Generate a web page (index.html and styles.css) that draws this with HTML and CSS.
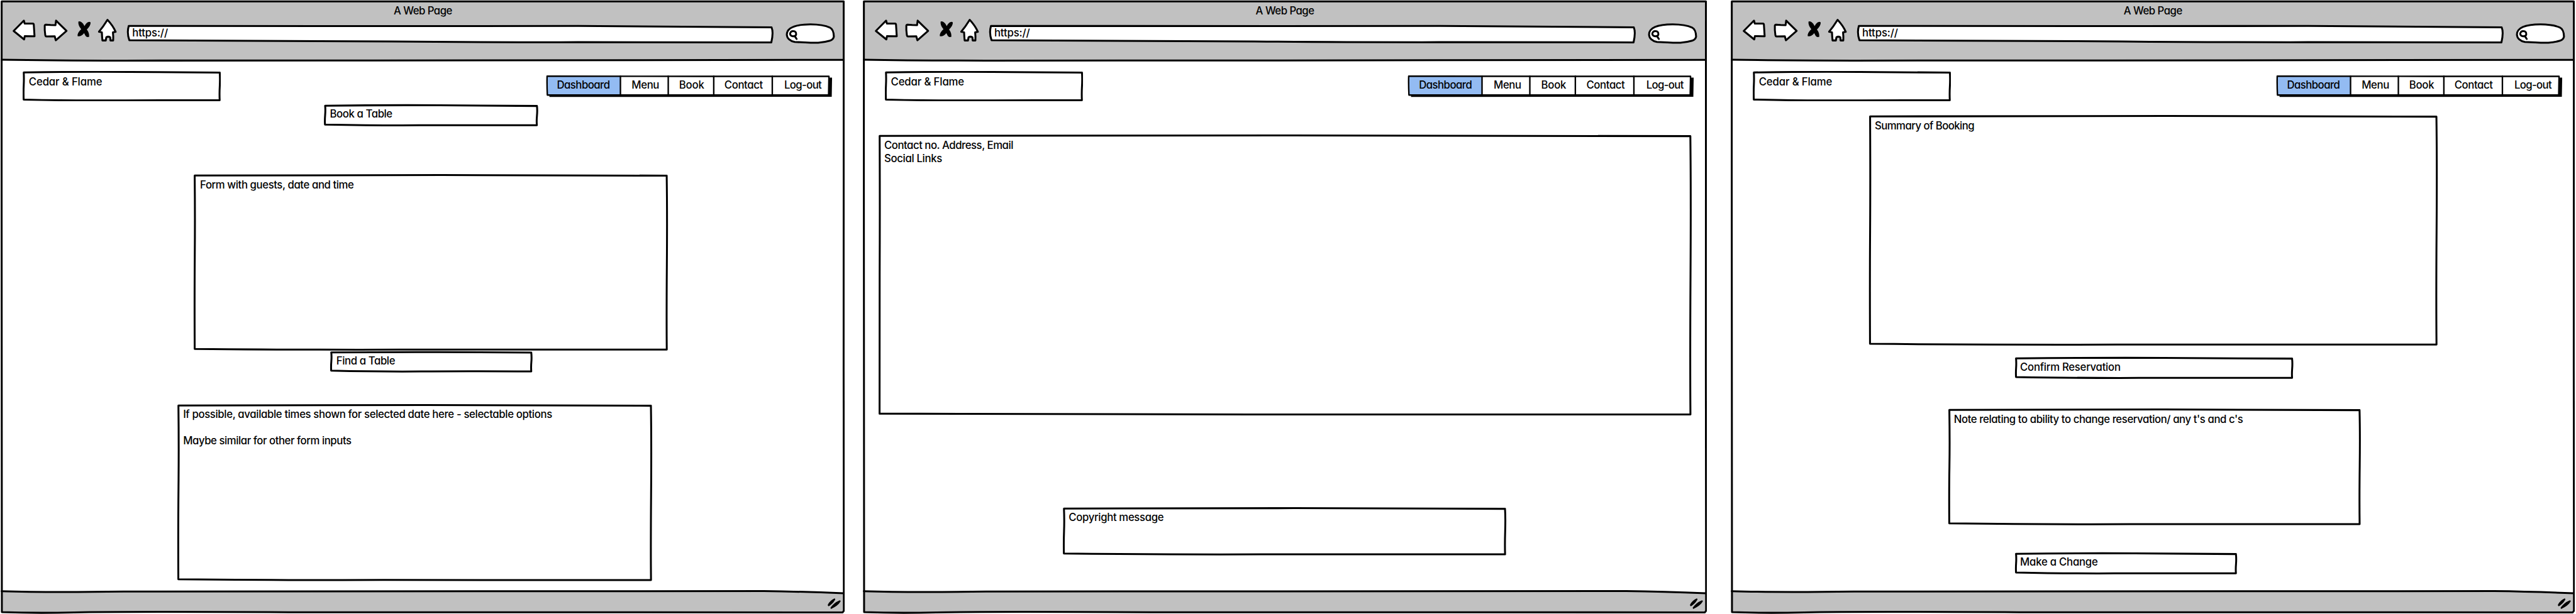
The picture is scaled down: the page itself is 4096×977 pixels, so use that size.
FILE: index.html
```html
<!DOCTYPE html>
<html lang="en">
<head>
<meta charset="utf-8">
<title>Cedar &amp; Flame wireframes</title>
<link rel="stylesheet" href="styles.css">
</head>
<body>
<svg class="defs" aria-hidden="true">
  <symbol id="frame" viewBox="2 0 2044 1488" preserveAspectRatio="none">
    <path fill="#c1c1c1" d="M4.5 3.5H2043.5V145L1500 145.6 900 146.6 150 146.6 4.5 145Z"/>
    <path fill="#c1c1c1" d="M4.5 1432.6Q110 1436 300 1433.5 1000 1430.8 1850 1432.4 1940 1433.5 2043.5 1437.6V1484H4.5Z"/>
    <g class="ink">
      <path d="M4.5 3.5H2043.6Q2044.6 500 2043.4 900L2044 1480 2041 1484Q1200 1485.4 700 1483.6 300 1481.6 180 1484 90 1486.4 5 1483.4 3.4 1100 4.4 400Z"/>
      <path d="M4.5 144.6Q120 146.6 300 146.8L900 146.6Q1500 145 2043 145"/>
      <path d="M4.5 1432.6Q110 1436 300 1433.5 1000 1430.8 1850 1432.4 1940 1433.5 2043.5 1437.6"/>
    </g>
    <path d="M2021 1450.4Q2024 1450.6 2022.8 1453.4 2017 1464 2007 1469.2 2004.6 1468.6 2005.2 1465 2011 1455 2021 1450.4Z"/>
    <path d="M2033 1455Q2036.6 1454.6 2036 1457.6 2029 1469 2013 1475.6 2011 1475 2012 1472 2020 1460.4 2033 1455Z"/>
  </symbol>
  <symbol id="back" viewBox="28 43 64 66">
    <path class="ink" fill="#fff" d="M33.6 75.4 58.4 50.2 60.4 57.6 80 57.4Q82.2 57.6 82.4 60L84.2 88.2 60.6 87.8 59 96Z"/>
  </symbol>
  <symbol id="forward" viewBox="100 43 72 66">
    <path class="ink" fill="#fff" d="M107.8 62.6Q108 60.2 110.8 60L122 60.8 133.8 61.2 135.2 50.4 160.6 75.2 134.6 98 132 88.4 112 88.6Q109.6 88.4 109.2 86 107.2 74 107.8 62.6Z"/>
  </symbol>
  <symbol id="stop" viewBox="180 43 48 66">
    <path d="M190.2 52.4Q196 50.6 201.6 58L205 63.4Q209 55.4 214.6 53.6 218.6 52.8 219.6 54.8 220.4 62 210.6 72 216.8 80 216.2 89.6 211.6 91.6 207.6 87.4L204 80.6Q197 89.4 188.2 88 187 79.6 197 71 188.6 61.6 190.2 52.4Z"/>
  </symbol>
  <symbol id="home" viewBox="236 43 56 66">
    <path class="ink" fill="#fff" d="M260.2 48.4Q273 62 280 77.4L273.4 78.8Q274.6 89 274 98.4H267.4L266.8 90.6Q262 88 257.4 90.6L256 98.4H248Q247 89 246.6 78.6L239.6 77.4Q250 65 260.2 48.4Z"/>
  </symbol>
  <symbol id="address" viewBox="300 43 1584 66">
    <path class="ink" fill="#fff" d="M311.6 63.2 1000 63.6 1400 63.2Q1700 65.4 1868.6 66.6 1873.6 79 1868 103L1400 102.6Q1150 102.8 950 100.8 700 98.6 313 97.8 306.6 80 311.6 63.2Z"/>
  </symbol>
  <symbol id="search" viewBox="1892 43 136 66">
    <path class="ink" fill="#fff" d="M1905.8 84C1906 66 1930 59.6 1963 59.4 1985 59.6 2000 62.4 2010 67 2017.6 71 2019.6 80 2019.8 89 2018.6 96 2015 97.6 2010 99 1990 105 1975 104.6 1950 103.2L1925 102C1914 100 1906 93 1905.8 84Z"/>
    <path class="ink" fill="none" d="M1921 75.6C1927 75.6 1929 80 1928.4 84 1927.6 88 1924.6 88.2 1920.6 88.2 1915 88 1913.6 84 1913.8 81.6 1914.6 78 1917 75.6 1921 75.6ZM1925.4 88.4 1929.6 94.8"/>
  </symbol>
  <symbol id="tabs" viewBox="1320 180 698 58">
    <path d="M1330 229H2006V188.3H2014.6L2013.8 234.8 1330 235.4Z"/>
    <path fill="#fff" d="M1324 185H2007V230H1324Z"/>
    <path fill="#93bbf2" d="M1324.6 185H1502V230H1324.6Z"/>
    <g class="ink thin">
      <path d="M1324.4 184.8 1700 185.3 2007 185.4 2006.2 230.4 1325 230.6Q1323.8 206 1324.4 184.8Z"/>
      <path d="M1502 185V230M1617.8 185V230M1728 185V230M1869.8 185V230"/>
    </g>
  </symbol>
  <symbol id="brand-box" viewBox="0 0 480 73">
    <path class="ink" fill="none" d="M2.6 3.4Q130 1.4 260 2.3T477.4 3.8Q478.4 20 477.4 37T477.2 70.8Q300 70.4 210 71.2T2.4 69.2Q1.8 50 2.6 34T2.6 3.4Z"/>
  </symbol>
</svg>

<main class="board">

  <section class="window window-book">
    <svg class="frame"><use href="#frame"/></svg>
    <div class="page">
      <header class="chrome">
        <h1 class="title">A Web Page</h1>
        <div class="toolbar">
          <svg class="back"><use href="#back"/></svg>
          <svg class="forward"><use href="#forward"/></svg>
          <svg class="stop"><use href="#stop"/></svg>
          <svg class="home"><use href="#home"/></svg>
          <div class="address"><svg><use href="#address"/></svg><span>https://</span></div>
          <svg class="search"><use href="#search"/></svg>
        </div>
      </header>
      <div class="topbar">
        <div class="brand"><svg viewBox="0 0 480 73"><use href="#brand-box"/></svg><p>Cedar &amp; Flame</p></div>
        <nav class="tabs">
          <svg><use href="#tabs"/></svg>
          <div class="tab-row">
            <a class="tab-dashboard">Dashboard</a><a class="tab-menu">Menu</a><a class="tab-book">Book</a><a class="tab-contact">Contact</a><a class="tab-logout">Log-out</a>
          </div>
        </nav>
      </div>
      <div class="box small book-table">
        <svg viewBox="0 0 519 53"><path class="ink" fill="none" d="M3 3.4Q140 1.6 280 2.3T516 4Q517.2 15 516 28T515.8 50.6Q330 50.2 230 50.8T2.6 49Q2 38 3 26T3 3.4Z"/></svg>
        <p>Book a Table</p>
      </div>
      <div class="box form">
        <svg viewBox="0 0 1148 428"><path class="ink" fill="none" d="M2.4 3.4Q300 1.8 600 2.4T1145.4 3.8Q1146.8 90 1145.8 220T1145.6 425.4Q700 424.6 500 425.4T2.4 423.6Q1.8 300 2.6 200T2.4 3.4Z"/></svg>
        <p>Form with guests, date and time</p>
      </div>
      <div class="box tiny find-table">
        <svg viewBox="0 0 490 51"><path class="ink" fill="none" d="M2.6 2.8Q130 1.6 260 1.9T487 3Q488.2 15 487.2 26T487 48.8Q320 48 220 48.8T2.4 46.8Q1.8 36 2.8 24T2.6 2.8Z"/></svg>
        <p>Find a Table</p>
      </div>
      <div class="box times">
        <svg viewBox="0 0 1150 429"><path class="ink" fill="none" d="M2.6 3.4Q300 1.8 600 2.4T1146.8 4Q1148.2 90 1147.2 220T1147 426.4Q700 425.4 500 426.2T2.4 424.4Q1.8 300 2.8 200T2.6 3.4Z"/></svg>
        <div class="lines"><p class="line-times">If possible, available times shown for selected date here - selectable options</p><p class="line-maybe">Maybe similar for other form inputs</p></div>
      </div>
    </div>
  </section>

  <section class="window window-contact">
    <svg class="frame"><use href="#frame"/></svg>
    <div class="page">
      <header class="chrome">
        <h1 class="title">A Web Page</h1>
        <div class="toolbar">
          <svg class="back"><use href="#back"/></svg>
          <svg class="forward"><use href="#forward"/></svg>
          <svg class="stop"><use href="#stop"/></svg>
          <svg class="home"><use href="#home"/></svg>
          <div class="address"><svg><use href="#address"/></svg><span>https://</span></div>
          <svg class="search"><use href="#search"/></svg>
        </div>
      </header>
      <div class="topbar">
        <div class="brand"><svg viewBox="0 0 480 73"><use href="#brand-box"/></svg><p>Cedar &amp; Flame</p></div>
        <nav class="tabs">
          <svg><use href="#tabs"/></svg>
          <div class="tab-row">
            <a class="tab-dashboard">Dashboard</a><a class="tab-menu">Menu</a><a class="tab-book">Book</a><a class="tab-contact">Contact</a><a class="tab-logout">Log-out</a>
          </div>
        </nav>
      </div>
      <div class="box contact">
        <svg viewBox="0 0 1969 681"><path class="ink" fill="none" d="M2.6 3.4Q500 1.8 1000 2.4T1965.8 4Q1967.4 140 1966.2 340T1966 678.4Q1200 677.6 900 678.4T2.4 676.4Q1.8 500 2.6 340T2.6 3.4Z"/></svg>
        <div class="lines"><p class="line-contact">Contact no. Address, Email</p><p class="line-social">Social Links</p></div>
      </div>
      <div class="box copyright">
        <svg viewBox="0 0 1074 117"><path class="ink" fill="none" d="M2.6 3.4Q300 1.8 560 2.4T1070.8 4Q1072.2 25 1071.2 58T1071 114.4Q700 113.6 480 114.4T2.4 112.4Q1.8 85 2.8 58T2.6 3.4Z"/></svg>
        <p>Copyright message</p>
      </div>
    </div>
  </section>

  <section class="window window-summary">
    <svg class="frame"><use href="#frame"/></svg>
    <div class="page">
      <header class="chrome">
        <h1 class="title">A Web Page</h1>
        <div class="toolbar">
          <svg class="back"><use href="#back"/></svg>
          <svg class="forward"><use href="#forward"/></svg>
          <svg class="stop"><use href="#stop"/></svg>
          <svg class="home"><use href="#home"/></svg>
          <div class="address"><svg><use href="#address"/></svg><span>https://</span></div>
          <svg class="search"><use href="#search"/></svg>
        </div>
      </header>
      <div class="topbar">
        <div class="brand"><svg viewBox="0 0 480 73"><use href="#brand-box"/></svg><p>Cedar &amp; Flame</p></div>
        <nav class="tabs">
          <svg><use href="#tabs"/></svg>
          <div class="tab-row">
            <a class="tab-dashboard">Dashboard</a><a class="tab-menu">Menu</a><a class="tab-book">Book</a><a class="tab-contact">Contact</a><a class="tab-logout">Log-out</a>
          </div>
        </nav>
      </div>
      <div class="box summary">
        <svg viewBox="0 0 1377 559"><path class="ink" fill="none" d="M2.4 3.4Q400 1.8 720 2.4T1373.8 4Q1375.4 120 1374.2 280T1374 556.4Q900 555.6 600 556.4T2.2 554.4Q1.6 400 2.4 280T2.4 3.4Z"/></svg>
        <p>Summary of Booking</p>
      </div>
      <div class="box small confirm">
        <svg viewBox="0 0 674 53"><path class="ink" fill="none" d="M2.4 3.4Q200 1.6 360 2.3T671 4Q672.2 15 671.2 28T671 50.6Q430 50.2 300 50.8T2.4 48.6Q1.8 38 2.6 26T2.4 3.4Z"/></svg>
        <p>Confirm Reservation</p>
      </div>
      <div class="box note">
        <svg viewBox="0 0 999 283"><path class="ink" fill="none" d="M2.4 3.4Q300 1.8 520 2.4T995.8 4Q997.2 60 996.2 140T996 280.4Q650 279.6 440 280.4T2.2 278.4Q1.6 200 2.6 140T2.4 3.4Z"/></svg>
        <p>Note relating to ability to change reservation/ any t's and c's</p>
      </div>
      <div class="box small change">
        <svg viewBox="0 0 538 53"><path class="ink" fill="none" d="M2.4 3.4Q150 1.6 290 2.3T535 4Q536.2 15 535.2 28T535 50.6Q350 50.2 240 50.8T2.4 48.6Q1.8 38 2.6 26T2.4 3.4Z"/></svg>
        <p>Make a Change</p>
      </div>
    </div>
  </section>

</main>
</body>
</html>
```
FILE: styles.css
```css
/* One board unit: the whole board is 6238 units wide. */
:root { --u: calc(100vw / 6238); }

* { box-sizing: border-box; margin: 0; padding: 0; }

body {
  background: #fff;
  color: #000;
  overflow: hidden;
  font-family: Inter, "Liberation Sans", sans-serif;
  font-size: calc(25.5 * var(--u));
  line-height: calc(32 * var(--u));
  font-weight: 500;
  font-feature-settings: "cv11";
  white-space: nowrap;
}

svg { display: block; overflow: visible; }
.defs { width: 0; height: 0; position: absolute; }

.ink { stroke: #000; stroke-width: 4.6; stroke-linejoin: round; stroke-linecap: round; }
g.ink { fill: none; }
.thin { stroke-width: 3.6; }

.board { display: flex; height: calc(1488 * var(--u)); }

/* Browser window: the drawn frame and the page share one grid cell */
.window { display: grid; grid-template: 100% / 100%; flex: none; width: calc(2044 * var(--u)); height: calc(1488 * var(--u)); }
.window > * { grid-area: 1 / 1; }
.window-book { margin-left: calc(2 * var(--u)); }
.window-contact { margin-left: calc(43.5 * var(--u)); }
.window-summary { margin-left: calc(58 * var(--u)); }
.frame { width: 100%; height: 100%; }
.page { display: flex; flex-direction: column; align-items: flex-start; }

.chrome { flex: none; width: 100%; height: calc(146 * var(--u)); }
.title {
  height: calc(43 * var(--u));
  padding-top: calc(10.7 * var(--u));
  font-size: inherit;
  font-weight: inherit;
  text-align: center;
  letter-spacing: calc(-0.79 * var(--u));
}
.toolbar { display: flex; gap: calc(8 * var(--u)); padding-left: calc(26 * var(--u)); }
.toolbar svg { flex: none; height: calc(66 * var(--u)); }
.back { width: calc(64 * var(--u)); }
.forward { width: calc(72 * var(--u)); }
.stop { width: calc(48 * var(--u)); }
.home { width: calc(56 * var(--u)); }
.address { display: grid; flex: none; width: calc(1584 * var(--u)); }
.address > * { grid-area: 1 / 1; }
.address svg { width: 100%; }
.address span { padding: calc(21.7 * var(--u)) 0 0 calc(20.2 * var(--u)); letter-spacing: calc(-0.19 * var(--u)); }
.search { width: calc(136 * var(--u)); }

/* Brand and navigation */
.topbar { display: flex; flex: none; height: calc(99.3 * var(--u)); }
.brand {
  display: grid;
  grid-template: 100% / 100%;
  width: calc(480 * var(--u));
  height: calc(73 * var(--u));
  margin: calc(26.3 * var(--u)) 0 0 calc(53 * var(--u));
}
.brand > * { grid-area: 1 / 1; }
.brand svg { width: 100%; height: 100%; }
.brand p { padding: calc(10.7 * var(--u)) 0 0 calc(14.8 * var(--u)); letter-spacing: calc(-0.2 * var(--u)); }

.tabs {
  display: grid;
  grid-template: 100% / 100%;
  width: calc(698 * var(--u));
  height: calc(58 * var(--u));
  margin: calc(34 * var(--u)) 0 0 calc(785 * var(--u));
}
.tabs > * { grid-area: 1 / 1; }
.tabs svg { width: 100%; height: 100%; }
.tab-row { display: flex; padding: calc(10.7 * var(--u)) 0 0 calc(4 * var(--u)); }
.tab-dashboard { width: calc(178 * var(--u)); padding-left: calc(24.6 * var(--u)); letter-spacing: calc(-0.8 * var(--u)); }
.tab-menu { width: calc(116 * var(--u)); padding-left: calc(27.6 * var(--u)); letter-spacing: calc(-0.6 * var(--u)); }
.tab-book { width: calc(110 * var(--u)); padding-left: calc(26.5 * var(--u)); letter-spacing: calc(-0.3 * var(--u)); }
.tab-contact { width: calc(142 * var(--u)); padding-left: calc(26.2 * var(--u)); letter-spacing: calc(-0.6 * var(--u)); }
.tab-logout { width: calc(137 * var(--u)); padding-left: calc(29.2 * var(--u)); letter-spacing: calc(-0.95 * var(--u)); }

/* Sketched boxes, sized and spaced in board units */
.box {
  --pad: 14.4;
  display: grid;
  grid-template: 100% / 100%;
  flex: none;
  width: calc(var(--w) * var(--u));
  height: calc(var(--h) * var(--u));
  margin-top: calc(var(--top) * var(--u));
  margin-left: calc(var(--left) * var(--u));
}
.box > * { grid-area: 1 / 1; }
.box > svg { width: 100%; height: 100%; }
.box > p, .lines { padding: calc(10.4 * var(--u)) 0 0 calc(var(--pad) * var(--u)); }
.small > p { padding-top: calc(8.5 * var(--u)); }
.tiny > p { padding-top: calc(7 * var(--u)); }

.book-table { --w: 519; --h: 53; --top: 7; --left: 782.4; letter-spacing: calc(-0.62 * var(--u)); }
.form { --w: 1148; --h: 428; --top: 117.1; --left: 467.4; --pad: 15; letter-spacing: calc(-0.63 * var(--u)); }
.find-table { --w: 490; --h: 51; --top: 1.6; --left: 798; letter-spacing: calc(-0.6 * var(--u)); }
.times { --w: 1150; --h: 429; --top: 75.6; --left: 427; }
.times .lines { display: grid; align-content: start; row-gap: calc(32 * var(--u)); }
.line-times { letter-spacing: calc(-0.54 * var(--u)); }
.line-maybe { letter-spacing: calc(-0.66 * var(--u)); }

.contact { --w: 1969; --h: 681; --top: 81.4; --left: 37.4; }
.line-contact { letter-spacing: calc(-0.72 * var(--u)); }
.line-social { letter-spacing: calc(-0.51 * var(--u)); }
.copyright { --w: 1074; --h: 117; --top: 220.7; --left: 484; letter-spacing: calc(-0.52 * var(--u)); }

.summary { --w: 1377; --h: 559; --top: 33; --left: 334; letter-spacing: calc(-0.82 * var(--u)); }
.confirm { --w: 674; --h: 53; --top: 28.5; --left: 688; --pad: 12.4; letter-spacing: calc(-0.42 * var(--u)); }
.note { --w: 999; --h: 283; --top: 71.2; --left: 526.5; --pad: 13.4; letter-spacing: calc(-0.63 * var(--u)); }
.change { --w: 538; --h: 53; --top: 65.5; --left: 688; --pad: 12.4; letter-spacing: calc(-0.38 * var(--u)); }
```
